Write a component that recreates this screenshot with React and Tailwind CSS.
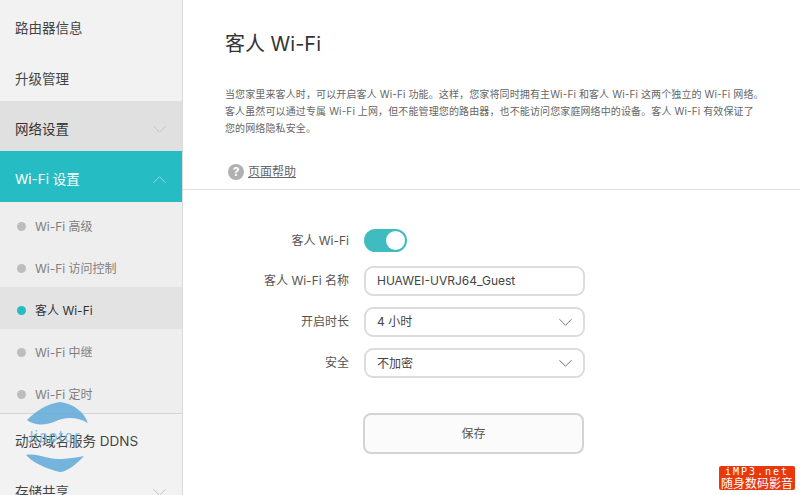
const FONT = { fontFamily: 'Inter,"Noto Sans CJK SC",sans-serif' };

function Chevron({ up, className, w = 13, h = 7 }) {
  return (
    <svg width={w} height={h} viewBox="0 0 13 7" fill="none" stroke="currentColor" strokeWidth="1" className={className}>
      <path d={up ? "M.5 6.8 L6.5 .7 L12.5 6.8" : "M.5 .2 L6.5 6.3 L12.5 .2"} />
    </svg>
  );
}

function TopItem({ label, cls = "", chevron, up, chevCls = "text-[#c4c4c4]" }) {
  return (
    <div className={`flex items-center justify-between pl-[15px] pr-[16px] text-[13.5px] ${cls}`}>
      <span>{label}</span>
      {chevron && <Chevron up={up} className={chevCls} />}
    </div>
  );
}

function SubItem({ label, active }) {
  return (
    <div className={`flex h-[42px] items-center pl-[17px] pt-[5px] text-[12px] ${active ? "bg-[#e3e3e3] text-[#333]" : "text-[#808080]"}`}>
      <span className={`mr-[9px] h-[9px] w-[9px] rounded-full ${active ? "bg-[#26bcc4]" : "bg-[#bdbdbd]"}`} />
      <span>{label}</span>
    </div>
  );
}

function Row({ label, children }) {
  return (
    <div className="flex items-center">
      <div className="w-[166px] pr-[15px] text-right text-[12px] text-[#555]">{label}</div>
      {children}
    </div>
  );
}

function Field({ children, arrow, cls = "" }) {
  return (
    <div className={`flex h-[30px] w-[221px] items-center justify-between rounded-[9px] border-2 border-[#dcdcdc] bg-white pl-[11px] pr-[11px] text-[12px] text-[#444] ${cls}`}>
      <span>{children}</span>
      {arrow && <Chevron className="text-[#777]" />}
    </div>
  );
}

export default function App() {
  return (
    <div className="relative flex h-[495px] w-[800px] overflow-hidden bg-white" style={FONT}>
      <aside className="h-[495px] w-[183px] shrink-0 overflow-hidden border-r border-[#d9d9d9] bg-[#f2f2f2] text-[#444]">
        <TopItem label="路由器信息" cls="h-[51px] pt-[5px]" />
        <TopItem label="升级管理" cls="h-[50px] pt-[6px]" />
        <TopItem label="网络设置" cls="h-[50px] bg-[#e0e0e0] pt-[6px] text-[#333]" chevron />
        <TopItem label="Wi-Fi 设置" cls="h-[51px] bg-[#26bcc4] pt-[5px] text-white" chevron up chevCls="text-[#8fdde1]" />
        <div className="h-[212px] border-b border-[#d4d4d4] bg-[#eeeeee] pt-[1px]">
          <SubItem label="Wi-Fi 高级" />
          <SubItem label="Wi-Fi 访问控制" />
          <SubItem label="客人 Wi-Fi" active />
          <SubItem label="Wi-Fi 中继" />
          <SubItem label="Wi-Fi 定时" />
        </div>
        <TopItem label="动态域名服务 DDNS" cls="h-[53px] pt-[2px]" />
        <TopItem label="存储共享" cls="h-[50px]" chevron />
      </aside>

      <main className="min-w-0 flex-1">
        <div className="h-[189px] pl-[42px] pr-[30px] pt-[30px]">
          <h1 className="text-[20px] leading-[28px] text-[#333]">客人 Wi-Fi</h1>
          <p className="mt-[28px] whitespace-nowrap text-[10px] leading-[17px] tracking-[0.12px] text-[#666]">
            当您家里来客人时，可以开启客人 Wi-Fi 功能。这样，您家将同时拥有主Wi-Fi 和客人 Wi-Fi 这两个独立的 Wi-Fi 网络。<br />
            客人虽然可以通过专属 Wi-Fi 上网，但不能管理您的路由器，也不能访问您家庭网络中的设备。客人 Wi-Fi 有效保证了<br />
            您的网络隐私安全。
          </p>
          <div className="mt-[26px] flex items-center pl-[3px]">
            <span className="flex h-[16px] w-[16px] items-center justify-center rounded-full bg-[#b0b0b0] text-[12px] font-bold leading-none text-white">?</span>
            <a className="ml-[4px] text-[12px] text-[#666] underline">页面帮助</a>
          </div>
        </div>
        <div className="h-[1px] bg-[#dedede]" />
        <div className="flex flex-col pl-[15px] pt-[39px]">
          <Row label="客人 Wi-Fi">
            <div className="flex h-[23px] w-[43px] items-center justify-end rounded-full bg-[#3fbcc0] pr-[2px]">
              <span className="h-[19px] w-[19px] rounded-full bg-white" />
            </div>
          </Row>
          <div className="mt-[14px]"><Row label="客人 Wi-Fi 名称"><Field cls="pb-[1px]">HUAWEI-UVRJ64_Guest</Field></Row></div>
          <div className="mt-[11px]"><Row label="开启时长"><Field arrow>4 小时</Field></Row></div>
          <div className="mt-[11px]"><Row label="安全"><Field arrow cls="pt-[1px]">不加密</Field></Row></div>
          <button className="ml-[165px] mt-[35px] h-[41px] w-[221px] rounded-[8px] border-2 border-[#d4d4d4] bg-[#fbfbfb] pt-[1px] text-[12px] text-[#555]">保存</button>
        </div>
      </main>

      {/* watermark */}
      <svg className="pointer-events-none absolute left-[24px] top-[402px]" width="68" height="72" viewBox="0 0 68 72">
        <path d="M3 18 C12 9 22 2 36 0 C50 2 60 10 64 21 C52 14 40 15 30 20 C20 24 9 23 3 18 Z" fill="#5fa9d8" opacity=".85" />
        <path d="M2 53 C14 51 22 57 34 57 C44 57 54 55 60 54 C52 63 42 70 36 70 C22 67 8 60 2 53 Z" fill="#5fa9d8" opacity=".85" />
        <text x="1" y="40" fontSize="15" fill="#6fb3e0" opacity=".8" letterSpacing="1">Jiaotor</text>
      </svg>

      {/* badge */}
      <div className="absolute left-[719px] top-[466px] flex h-[24px] w-[76px] flex-col items-center rounded-[2px] bg-[#e8380d] text-white">
        <span className="text-[10px] leading-[11px] tracking-[2px]" style={{ fontFamily: '"DejaVu Sans Mono",monospace' }}>iMP3.net</span>
        <span className="text-[12px] leading-[12px]" style={{ fontFamily: '"Noto Sans CJK SC",sans-serif' }}>随身数码影音</span>
      </div>
    </div>
  );
}
